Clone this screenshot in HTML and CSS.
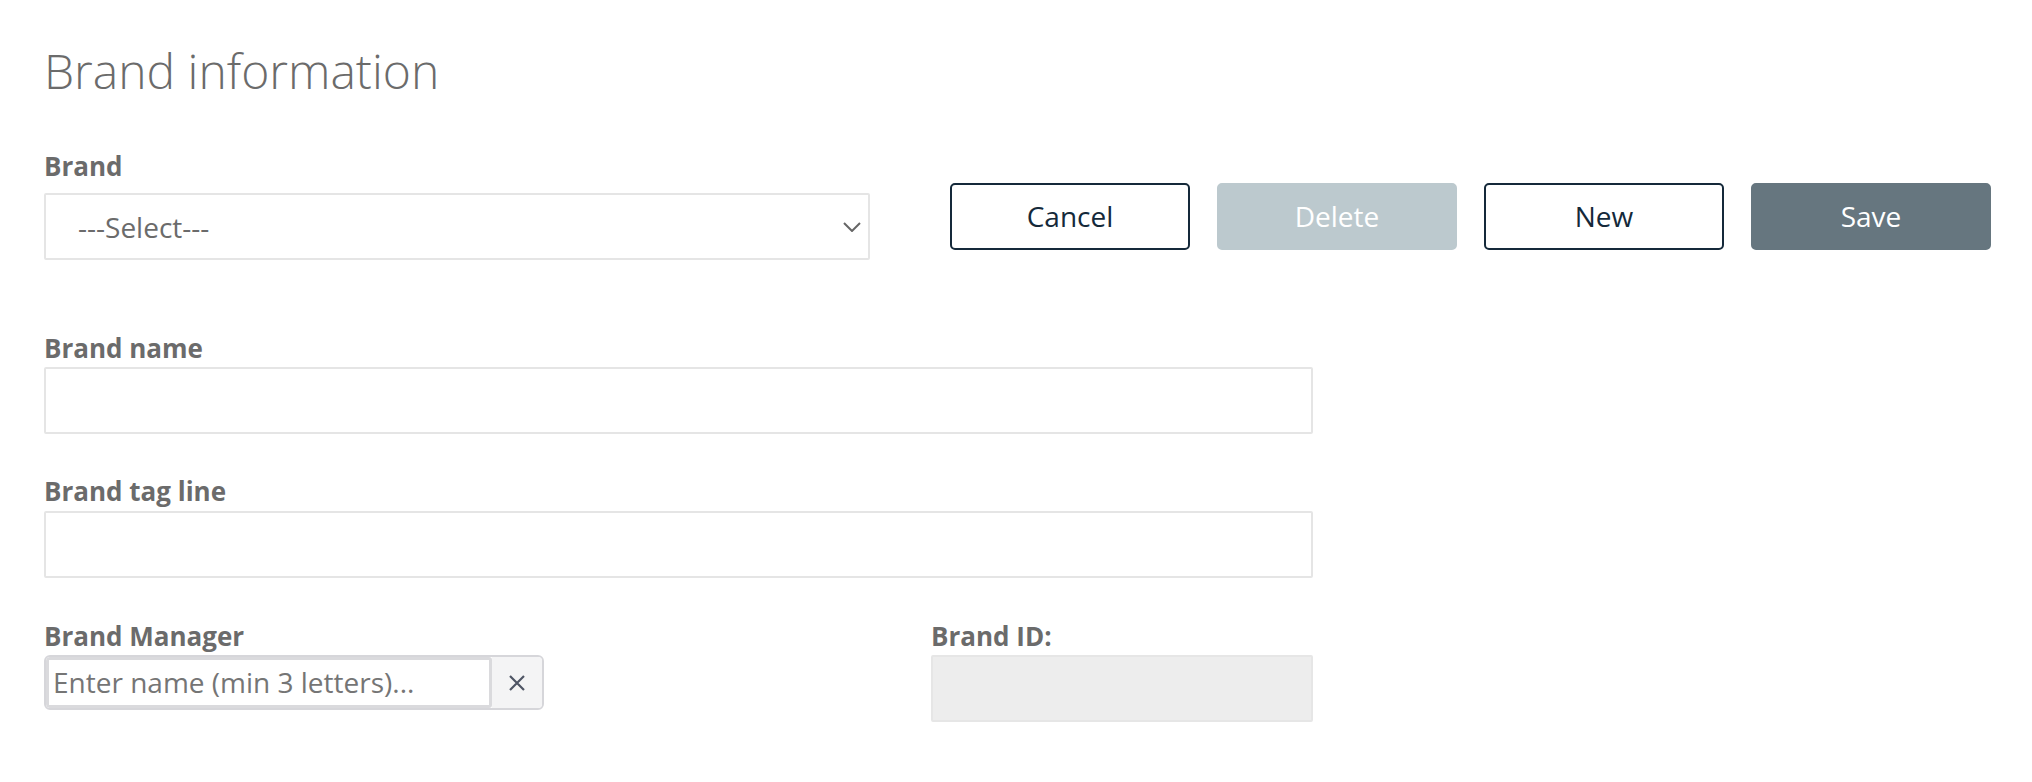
FILE: index.html
```html
<!DOCTYPE html>
<html lang="en">
<head>
<meta charset="utf-8">
<title>Brand information</title>
<link rel="stylesheet" href="styles.css">
</head>
<body>
<div class="page">
  <h1 class="title">Brand information</h1>

  <div class="top-row">
    <div class="brand-col">
      <label class="label">Brand</label>
      <div class="select">
        <span class="select-text">---Select---</span>
        <svg class="chevron" width="18" height="10" viewBox="0 0 18 10"><path d="M1 1 L9 9 L17 1" fill="none" stroke="#666" stroke-width="2"/></svg>
      </div>
    </div>
    <div class="actions">
      <button class="btn btn-outline">Cancel</button>
      <button class="btn btn-disabled">Delete</button>
      <button class="btn btn-outline">New</button>
      <button class="btn btn-primary">Save</button>
    </div>
  </div>

  <div class="field wide">
    <label class="label">Brand name</label>
    <div class="input"></div>
  </div>

  <div class="field wide">
    <label class="label">Brand tag line</label>
    <div class="input tag"></div>
  </div>

  <div class="bottom-row">
    <div class="manager-col">
      <label class="label">Brand Manager</label>
      <div class="group">
        <div class="group-input">Enter name (min 3 letters)...</div>
        <div class="group-clear">
          <svg width="18" height="18" viewBox="0 0 18 18"><path d="M2 2 L16 16 M16 2 L2 16" fill="none" stroke="#4f5565" stroke-width="2.2"/></svg>
        </div>
      </div>
    </div>
    <div class="id-col">
      <label class="label">Brand ID:</label>
      <div class="input readonly"></div>
    </div>
  </div>
</div>
</body>
</html>
```

FILE: styles.css
```css
* { box-sizing: border-box; }

html, body {
  margin: 0;
  background: #ffffff;
}

body {
  font-family: "Open Sans", "Liberation Sans", sans-serif;
  color: #6b6b6b;
}

.page {
  padding: 42px 41px 0 44px;
}

.title {
  margin: 0;
  font-size: 48px;
  line-height: 58px;
  font-weight: 300;
  color: #6b6b6b;
}

.label {
  display: block;
  font-size: 26px;
  line-height: 36px;
  font-weight: 700;
  color: #6b6b6b;
}

.top-row {
  display: flex;
  align-items: flex-start;
  margin-top: 48px;
}

.brand-col {
  width: 826px;
  flex: 0 0 826px;
}

.select {
  margin-top: 9px;
  height: 67px;
  border: 2px solid #e5e5e5;
  border-radius: 2px;
  display: flex;
  align-items: center;
  justify-content: space-between;
  padding: 0 7px 0 32px;
}

.select-text {
  font-size: 28px;
  color: #6b6b6b;
}

.chevron {
  display: block;
}

.actions {
  display: flex;
  gap: 27px;
  margin-left: 80px;
  margin-top: 35px;
}

.btn {
  width: 240px;
  height: 67px;
  border-radius: 5px;
  font-family: "Open Sans", "Liberation Sans", sans-serif;
  font-size: 28px;
  font-weight: 400;
  padding: 0 0 2px;
  border: 2px solid transparent;
}

.btn-outline {
  background: #ffffff;
  border-color: #15293a;
  color: #14293a;
}

.btn-disabled {
  background: #bcc9ce;
  border-color: #bcc9ce;
  color: #ffffff;
}

.btn-primary {
  background: #66767f;
  border-color: #66767f;
  color: #ffffff;
}

.field {
  margin-top: 70px;
}

.field + .field {
  margin-top: 39px;
}

.wide {
  width: 1269px;
}

.input {
  margin-top: 1px;
  height: 67px;
  border: 2px solid #e5e5e5;
  border-radius: 2px;
  background: #ffffff;
}

.input.tag {
  margin-top: 2px;
}

.bottom-row {
  display: flex;
  margin-top: 40px;
  width: 1269px;
}

.manager-col {
  flex: 0 0 887px;
}

.id-col {
  flex: 0 0 382px;
}

.group {
  margin-top: 1px;
  width: 500px;
  height: 55px;
  display: flex;
  border: 2px solid #d6d6da;
  border-radius: 6px;
  overflow: hidden;
}

.group-input {
  flex: 1;
  border: 3px solid #dadadd;
  border-radius: 3px;
  background: #ffffff;
  font-size: 28px;
  line-height: 45px;
  padding-left: 4px;
  color: #757575;
  white-space: nowrap;
  overflow: hidden;
}

.group-clear {
  width: 50px;
  flex: 0 0 50px;
  background: #f4f4f5;
  display: flex;
  align-items: center;
  justify-content: center;
}

.input.readonly {
  background: #ededed;
  border-color: #e6e6e6;
}
```
